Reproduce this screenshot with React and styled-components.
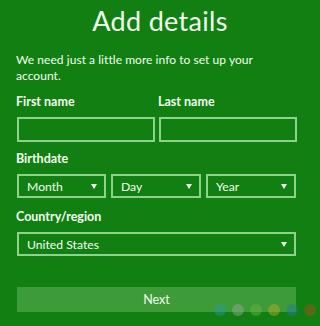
import React from 'react'
import styled, { createGlobalStyle } from 'styled-components'

const GlobalStyle = createGlobalStyle`
  html, body {
    margin: 0;
    padding: 0;
    background: #107c10;
  }
  * { box-sizing: border-box; }
`

const Page = styled.div`
  position: relative;
  width: 320px;
  height: 326px;
  overflow: hidden;
  background: #127f12;
  color: #f2fff0;
  font-family: Lato, "Noto Sans", sans-serif;
  padding: 4px 24px 0 17px;
`

const Title = styled.h1`
  margin: 0 0 0 -17px;
  width: 320px;
  text-align: center;
  font-weight: 400;
  font-size: 27px;
  line-height: 34px;
  letter-spacing: 0.3px;
`

const Intro = styled.p`
  margin: 14px 0 0 -1px;
  font-size: 12px;
  line-height: 16px;
  letter-spacing: 0.05px;
`

const FieldRow = styled.div`
  display: grid;
  grid-template-columns: ${props => props.cols};
  column-gap: ${props => props.gap || '4px'};
`

const Field = styled.div`
  display: flex;
  flex-direction: column;
`

const Label = styled.div`
  margin-left: -1px;
  font-size: 12.5px;
  font-weight: 700;
  line-height: 16px;
  margin-top: ${props => props.top || '0px'};
  margin-bottom: 7px;
`

const TextBox = styled.div`
  height: 25px;
  border: 2px solid #8fd28c;
`

const Select = styled.div`
  height: 24px;
  border: 2px solid #8fd28c;
  display: flex;
  align-items: center;
  justify-content: space-between;
  padding: 0 7px 0 8px;
  font-size: 12.2px;

  .caret {
    width: 0;
    height: 0;
    border-left: 3px solid transparent;
    border-right: 3px solid transparent;
    border-top: 5px solid #f2fff0;
  }
`

const NextButton = styled.div`
  margin-top: 31px;
  height: 25px;
  background: #3e9b3a;
  display: flex;
  align-items: center;
  justify-content: center;
  font-size: 12.5px;
`

const Dots = styled.div`
  position: absolute;
  left: 214px;
  top: 304px;
  display: flex;
  gap: 6px;
`

const Dot = styled.span`
  width: 12px;
  height: 12px;
  border-radius: 50%;
  background: ${props => props.color};
`

function Dropdown({ text }) {
  return (
    <Select>
      <span>{text}</span>
      <span className="caret" />
    </Select>
  )
}

export default function App() {
  return (
    <>
      <GlobalStyle />
      <Page>
        <Title>Add details</Title>
        <Intro>We need just a little more info to set up your account.</Intro>

        <FieldRow cols="138px 138px" gap="4px">
          <Field>
            <Label top="10px">First name</Label>
            <TextBox />
          </Field>
          <Field>
            <Label top="10px">Last name</Label>
            <TextBox />
          </Field>
        </FieldRow>

        <Label top="9px">Birthdate</Label>
        <FieldRow cols="89px 90px 90px" gap="5px">
          <Dropdown text="Month" />
          <Dropdown text="Day" />
          <Dropdown text="Year" />
        </FieldRow>

        <Label top="11px">Country/region</Label>
        <Dropdown text="United States" />

        <NextButton>Next</NextButton>

        <Dots>
          <Dot color="rgba(40,150,170,0.45)" />
          <Dot color="rgba(150,170,150,0.45)" />
          <Dot color="rgba(110,180,70,0.45)" />
          <Dot color="rgba(190,170,40,0.45)" />
          <Dot color="rgba(40,120,170,0.45)" />
          <Dot color="rgba(170,80,30,0.45)" />
        </Dots>
      </Page>
    </>
  )
}
